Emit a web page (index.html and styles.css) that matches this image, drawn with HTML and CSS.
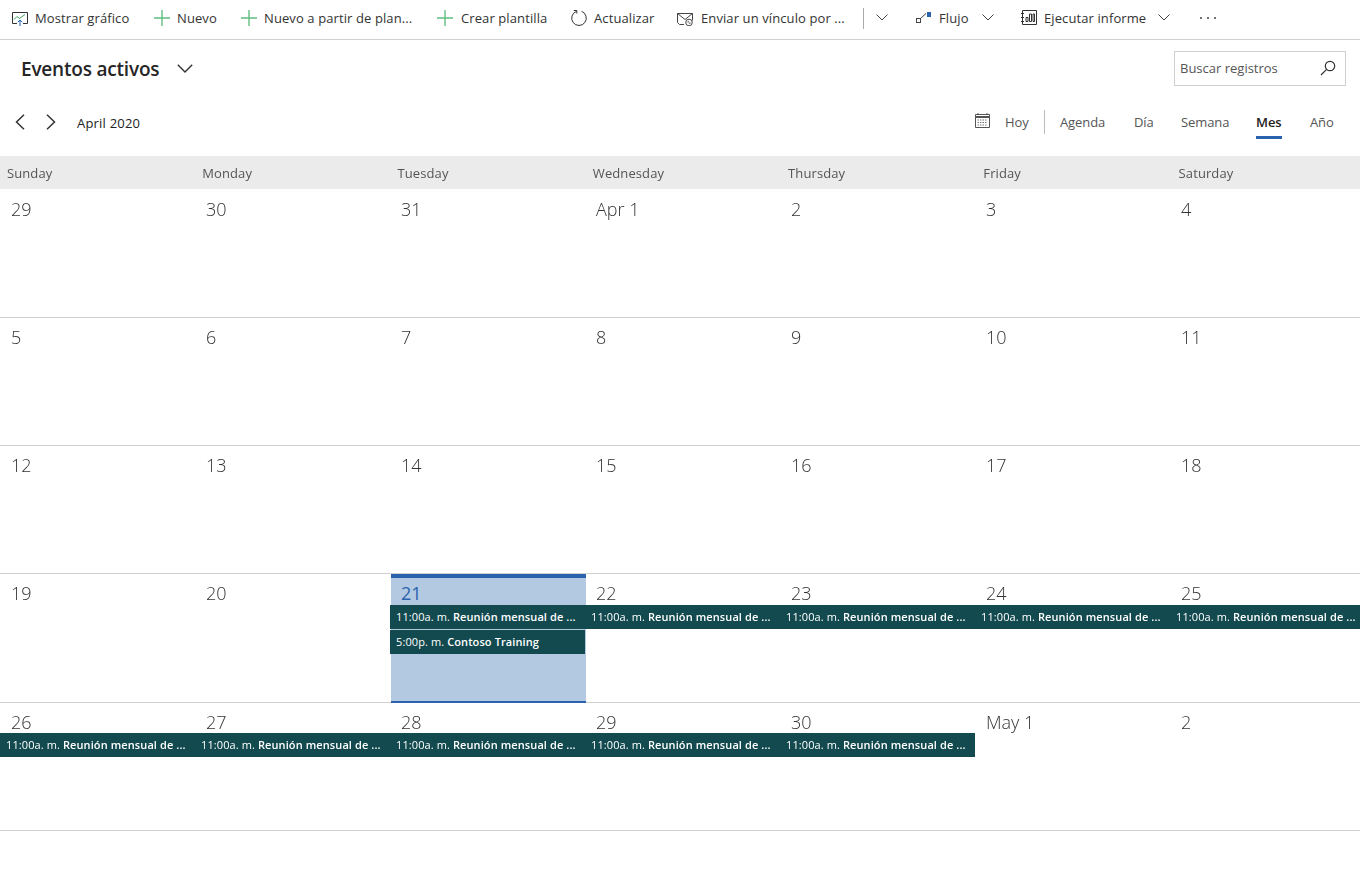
FILE: index.html
```html
<!DOCTYPE html>
<html lang="es">
<head>
<meta charset="utf-8">
<title>Eventos activos</title>
<link rel="stylesheet" href="styles.css">
</head>
<body>
<div class="toolbar">
  <div class="tb-item w-chart"><svg class="ic" viewBox="0 0 16 16"><path d="M5 13.500H.5v-11h15v11H11" fill="none" stroke="#333"/><path d="M2 9.500l3-3 2.500 2L13 4.500" fill="none" stroke="#3aa35c"/><path d="M8 16V10M5.800 12.200L8 10l2.200 2.200" fill="none" stroke="#1f5fb0"/></svg><span>Mostrar gráfico</span></div>
  <div class="tb-item w-new"><svg class="ic" viewBox="0 0 16 16"><path d="M8 0v16M0 8h16" stroke="#5fbf80" stroke-width="1.400"/></svg><span>Nuevo</span></div>
  <div class="tb-item w-from"><svg class="ic" viewBox="0 0 16 16"><path d="M8 0v16M0 8h16" stroke="#5fbf80" stroke-width="1.400"/></svg><span>Nuevo a partir de plan...</span></div>
  <div class="tb-item w-tpl wide"><svg class="ic" viewBox="0 0 16 16"><path d="M8 0v16M0 8h16" stroke="#5fbf80" stroke-width="1.400"/></svg><span>Crear plantilla</span></div>
  <div class="tb-item w-upd"><svg class="ic" viewBox="0 0 16 16"><path d="M5.500 1.300A7.300 7.300 0 1 0 10.500 1.300" fill="none" stroke="#333"/><path d="M2.800 .5h3v3" fill="none" stroke="#333"/></svg><span>Actualizar</span></div>
  <div class="tb-item w-mail wide"><svg class="ic" viewBox="0 0 16 16"><path d="M7 14.500H2.500l-2-2v-9h15v7" fill="none" stroke="#444"/><path d="M.5 3.500l7.500 6 7.500-6" fill="none" stroke="#444"/><circle cx="12" cy="12.500" r="3.300" fill="#fff" stroke="#444"/><path d="M10 12.500c1-1.500 2-1.500 2 0s1 1.500 2 0" fill="none" stroke="#444" stroke-width=".8"/></svg><span>Enviar un vínculo por ...</span></div>
  <div class="tb-sep"></div>
  <div class="tb-chev"><svg class="chev" viewBox="0 0 12 7"><path d="M.5.500L6 6l5.500-5.500" fill="none" stroke="#444"/></svg></div>
  <div class="tb-item w-flow wide"><svg class="ic" viewBox="0 0 16 16"><rect x="1.500" y="8.500" width="4" height="4" fill="none" stroke="#444"/><path d="M5.500 8.500l5.500-5" stroke="#444"/><rect x="12" y="2" width="5" height="5" fill="#2b62ad"/></svg><span>Flujo</span><svg class="chev after-flow" viewBox="0 0 12 7"><path d="M.5.500L6 6l5.500-5.500" fill="none" stroke="#444"/></svg></div>
  <div class="tb-item w-run"><svg class="ic" viewBox="0 0 16 16"><path d="M1.500 .5h14v14h-14z M0 3.500h3M0 7.500h3M0 11.500h3" fill="none" stroke="#333"/><path d="M5 11.500V7.500h2v4zM8.500 11.500V4h2v7.500zM12 11.500V4h1.500v7.500z" fill="none" stroke="#333"/></svg><span>Ejecutar informe</span><svg class="chev after-run" viewBox="0 0 12 7"><path d="M.5.500L6 6l5.500-5.500" fill="none" stroke="#444"/></svg></div>
  <div class="tb-more"><i></i><i></i><i></i></div>
</div>

<div class="view-head">
  <h1>Eventos activos</h1>
  <svg class="view-chev" viewBox="0 0 16 9"><path d="M.8.800L8 8l7.200-7.200" fill="none" stroke="#333" stroke-width="1.400"/></svg>
  <div class="search"><span>Buscar registros</span><svg viewBox="0 0 16 16"><circle cx="10" cy="6" r="4.700" fill="none" stroke="#333" stroke-width="1.200"/><path d="M6.600 9.400L1 15" stroke="#333" stroke-width="1.200"/></svg></div>
</div>

<div class="cal-nav">
  <svg class="nav-arrow" viewBox="0 0 10 16"><path d="M9 .7L1.500 8 9 15.300" fill="none" stroke="#333" stroke-width="1.500"/></svg>
  <svg class="nav-arrow next" viewBox="0 0 10 16"><path d="M1 .7L8.500 8 1 15.300" fill="none" stroke="#333" stroke-width="1.500"/></svg>
  <span class="month">April 2020</span>
  <div class="views">
    <svg class="cal-ic" viewBox="0 0 15 15"><path d="M.5 1.500h14v13H.500z" fill="none" stroke="#555"/><path d="M.5 4h14" stroke="#555" stroke-width="2"/><path d="M3 0v2M12 0v2" stroke="#555"/><path d="M2.500 7h10M2.500 9.500h10M2.500 12h10" stroke="#777" stroke-dasharray="1.500 1"/></svg>
    <span class="v v-hoy">Hoy</span>
    <span class="v-sep"></span>
    <span class="v v-ag">Agenda</span>
    <span class="v v-dia">Día</span>
    <span class="v v-sem">Semana</span>
    <span class="v v-mes">Mes</span>
    <span class="v v-ano">Año</span>
  </div>
</div>

<div class="cal">
  <div class="dow"><span>Sunday</span><span>Monday</span><span>Tuesday</span><span>Wednesday</span><span>Thursday</span><span>Friday</span><span>Saturday</span></div>
  <div class="week">
    <div class="d">29</div><div class="d">30</div><div class="d">31</div><div class="d">Apr 1</div><div class="d">2</div><div class="d">3</div><div class="d">4</div>
  </div>
  <div class="week">
    <div class="d">5</div><div class="d">6</div><div class="d">7</div><div class="d">8</div><div class="d">9</div><div class="d">10</div><div class="d">11</div>
  </div>
  <div class="week">
    <div class="d">12</div><div class="d">13</div><div class="d">14</div><div class="d">15</div><div class="d">16</div><div class="d">17</div><div class="d">18</div>
  </div>
  <div class="week">
    <div class="d">19</div><div class="d">20</div>
    <div class="d today">21
      <div class="ev"><span>11:00a. m. <b>Reunión mensual de ...</b></span></div>
      <div class="ev second"><span>5:00p. m. <b>Contoso Training</b></span></div>
    </div>
    <div class="d">22<div class="ev"><span>11:00a. m. <b>Reunión mensual de ...</b></span></div></div>
    <div class="d">23<div class="ev"><span>11:00a. m. <b>Reunión mensual de ...</b></span></div></div>
    <div class="d">24<div class="ev"><span>11:00a. m. <b>Reunión mensual de ...</b></span></div></div>
    <div class="d">25<div class="ev"><span>11:00a. m. <b>Reunión mensual de ...</b></span></div></div>
  </div>
  <div class="week">
    <div class="d">26<div class="ev"><span>11:00a. m. <b>Reunión mensual de ...</b></span></div></div>
    <div class="d">27<div class="ev"><span>11:00a. m. <b>Reunión mensual de ...</b></span></div></div>
    <div class="d">28<div class="ev"><span>11:00a. m. <b>Reunión mensual de ...</b></span></div></div>
    <div class="d">29<div class="ev"><span>11:00a. m. <b>Reunión mensual de ...</b></span></div></div>
    <div class="d">30<div class="ev"><span>11:00a. m. <b>Reunión mensual de ...</b></span></div></div>
    <div class="d">May 1</div><div class="d">2</div>
  </div>
</div>
</body>
</html>
```
FILE: styles.css
```css
* { box-sizing: border-box; }
html, body { margin: 0; padding: 0; }
body { width: 1360px; height: 884px; overflow: hidden; background: #fff; color: #333; font-family: "Open Sans", "Liberation Sans", sans-serif; font-size: 13px; }
.toolbar, .view-head, .cal-nav, .cal { opacity: .999; }

.toolbar { height: 40px; border-bottom: 1px solid #d0d0d0; display: flex; align-items: center; padding-left: 12px; padding-bottom: 3px; white-space: nowrap; }
.tb-item { display: flex; align-items: center; flex: none; }
.tb-item span { letter-spacing: .1px; }
.ic { width: 16px; height: 16px; margin-right: 7px; flex: none; }
.wide .ic { margin-right: 8px; }
.w-chart { width: 142px; }
.w-new { width: 87px; }
.w-from { width: 196px; }
.w-tpl { width: 134px; }
.w-upd { width: 106px; }
.w-mail { width: 186px; }
.tb-sep { width: 1px; height: 21px; background: #aaa; flex: none; }
.tb-chev { width: 51px; padding-left: 12px; flex: none; display: flex; }
.chev { width: 12px; height: 7px; flex: none; margin-top: -2px; }
.w-flow { width: 106px; }
.after-flow { margin-left: 13px; }
.w-run { width: 179px; }
.after-run { margin-left: 12px; }
.tb-more { display: flex; gap: 5px; }
.tb-more i { width: 2px; height: 2px; background: #444; border-radius: 50%; }

.view-head { height: 56px; display: flex; align-items: center; padding: 0 14px 0 21px; }
.view-head h1 { margin: 2px 0 0; font-size: 19px; font-weight: 600; color: #262626; letter-spacing: -.2px; }
.view-chev { width: 16px; height: 9px; margin-left: 18px; }
.search { margin-left: auto; width: 172px; height: 35px; border: 1px solid #d0d0d0; display: flex; align-items: center; justify-content: space-between; padding: 0 9px 0 5px; color: #555; }
.search svg { width: 16px; height: 16px; }

.cal-nav { height: 60px; display: flex; align-items: center; padding: 0 24px 6px 15px; }
.nav-arrow { width: 10px; height: 16px; flex: none; margin-top: -2px; }
.next { margin-left: 21px; }
.month { margin-left: 21px; color: #222; letter-spacing: .2px; }
.views { margin-left: auto; display: flex; align-items: center; height: 100%; padding-bottom: 2px; color: #555; letter-spacing: -.1px; }
.cal-ic { width: 15px; height: 15px; margin-right: 15px; margin-top: -4px; }
.v { flex: none; position: relative; }
.v-hoy { width: 39px; }
.v-sep { width: 1px; height: 24px; background: #bbb; margin-right: 15px; }
.v-ag { width: 74px; }
.v-dia { width: 47px; }
.v-sem { width: 75px; }
.v-mes { width: 54px; color: #222; font-weight: 600; }
.v-mes::after { content: ""; position: absolute; left: 0; top: 23px; width: 26px; height: 3px; background: #2b62ad; }
.v-ano { width: 26px; }

.cal { width: 1360px; overflow: hidden; }
.dow { display: grid; grid-template-columns: repeat(7, 195.28px); width: 1367px; height: 33px; margin-bottom: .6px; background: #ebebeb; align-items: center; color: #555; letter-spacing: .1px; }
.dow span { padding-left: 7px; }
.week { display: grid; grid-template-columns: repeat(7, 195px); width: 1365px; height: 128.250px; border-bottom: 1px solid #d0d0d0; }
.d { font-size: 18px; font-weight: 300; line-height: 24px; color: #333; padding: 7px 0 0 11px; position: relative; }
.today { background: #b3c9e2; color: #2b62ad; font-weight: 400; border-top: 4px solid #2b62ad; border-bottom: 2px solid #2b62ad; padding-top: 3px; padding-left: 10px; margin: 0 -1px -1px 1px; }
.ev { position: absolute; left: 0; right: 0; top: 30.5px; height: 24px; background: #134a4f; color: #fff; font-size: 11px; font-weight: 400; line-height: 24px; padding-left: 6px; white-space: nowrap; overflow: hidden; letter-spacing: .1px; }
.ev b { font-weight: 600; }
.today .ev { top: 26.5px; left: -1px; right: 1px; }
.today .second { top: 51.5px; }
```
